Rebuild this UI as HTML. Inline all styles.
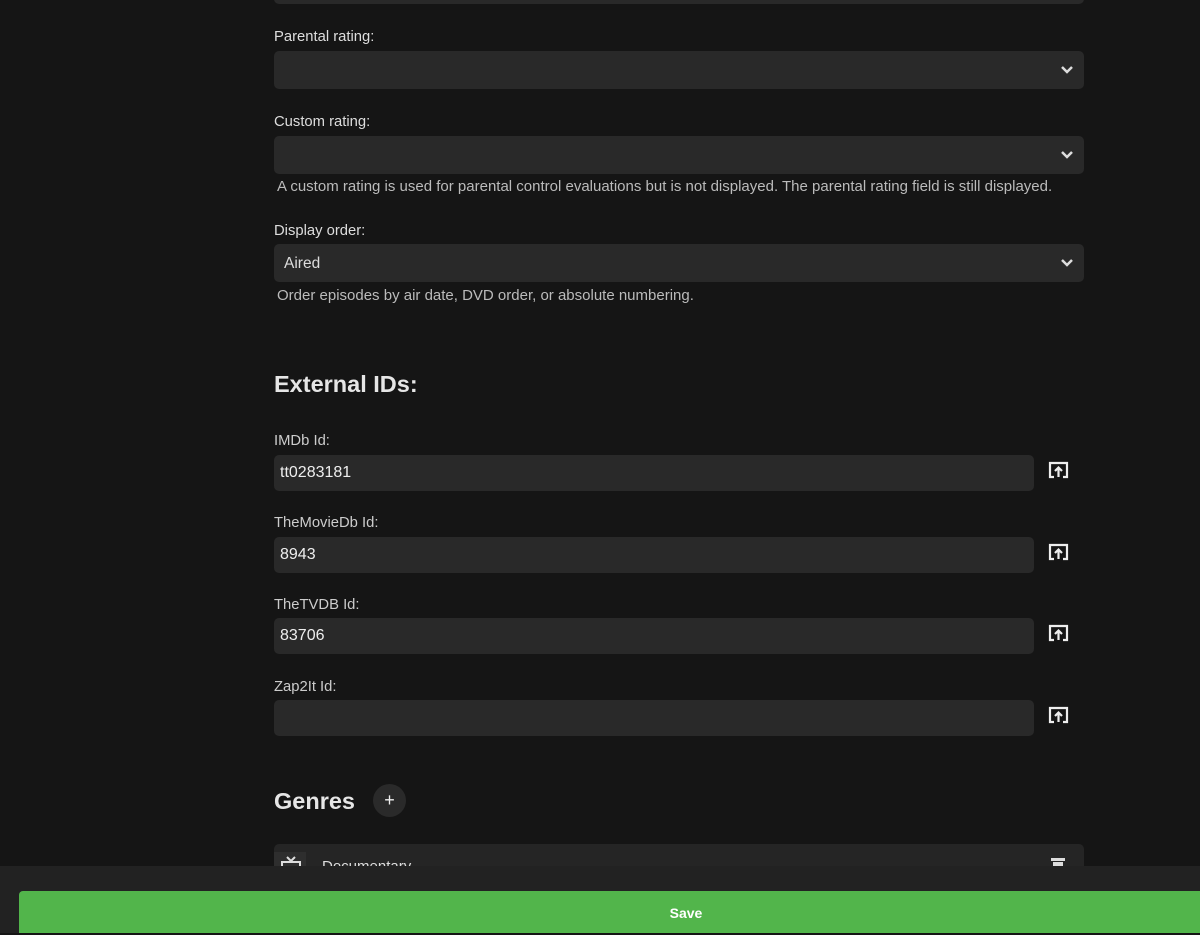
<!DOCTYPE html>
<html><head><style>
*{margin:0;padding:0;box-sizing:border-box}
body{width:1200px;height:933px;background:#151515;font-family:"Liberation Sans",sans-serif;color:#e6e6e6;position:relative;overflow:hidden}
.a{position:absolute}
.lbl{font-size:14.8px;color:#ddd}
.sel{background:#292929;border-radius:5px;height:38px;width:810px;left:274px}
.sel span{position:absolute;left:10px;top:11px;font-size:15.5px;color:#ddd}
.chev{position:absolute;right:10px;top:13px}
.help{font-size:15px;color:#bbb;left:277px}
.inp{background:#292929;border-radius:5px;height:36px;width:760px;left:274px}
.inp span{position:absolute;left:6px;top:9px;font-size:16px;color:#eee}
.ic{left:1048px}
</style></head><body>
<div class="a sel" style="top:-34px"></div>
<div class="a lbl" style="left:274px;top:29px">Parental rating:</div>
<div class="a sel" style="top:51px"><svg class="chev" width="14" height="12" viewBox="0 0 14 12"><path d="M2 3l5 5 5-5" stroke="#ddd" stroke-width="2.5" fill="none"/></svg></div>
<div class="a lbl" style="left:274px;top:114px">Custom rating:</div>
<div class="a sel" style="top:136px"><svg class="chev" width="14" height="12" viewBox="0 0 14 12"><path d="M2 3l5 5 5-5" stroke="#ddd" stroke-width="2.5" fill="none"/></svg></div>
<div class="a help" style="top:178px">A custom rating is used for parental control evaluations but is not displayed. The parental rating field is still displayed.</div>
<div class="a lbl" style="left:274px;top:223px">Display order:</div>
<div class="a sel" style="top:244px"><span>Aired</span><svg class="chev" width="14" height="12" viewBox="0 0 14 12"><path d="M2 3l5 5 5-5" stroke="#ddd" stroke-width="2.5" fill="none"/></svg></div>
<div class="a help" style="top:287px">Order episodes by air date, DVD order, or absolute numbering.</div>
<div class="a" style="left:274px;top:371px;font-size:23.5px;font-weight:bold;color:#e6e6e6">External IDs:</div>

<div class="a lbl" style="left:274px;top:433px;color:#ccc">IMDb Id:</div>
<div class="a inp" style="top:455px"><span>tt0283181</span></div>
<div class="a lbl" style="left:274px;top:515px;color:#ccc">TheMovieDb Id:</div>
<div class="a inp" style="top:537px"><span>8943</span></div>
<div class="a lbl" style="left:274px;top:597px;color:#ccc">TheTVDB Id:</div>
<div class="a inp" style="top:618px"><span>83706</span></div>
<div class="a lbl" style="left:274px;top:679px;color:#ccc">Zap2It Id:</div>
<div class="a inp" style="top:700px"></div>
<svg class="a ic" style="top:461px" width="21" height="18" viewBox="0 0 21 18"><path d="M6 16H2V2h17v14h-4" stroke="#eee" stroke-width="2.2" fill="none"/><path d="M10.5 16V7M7 10l3.5-3.5L14 10" stroke="#eee" stroke-width="2.2" fill="none"/></svg>
<svg class="a ic" style="top:543px" width="21" height="18" viewBox="0 0 21 18"><path d="M6 16H2V2h17v14h-4" stroke="#eee" stroke-width="2.2" fill="none"/><path d="M10.5 16V7M7 10l3.5-3.5L14 10" stroke="#eee" stroke-width="2.2" fill="none"/></svg>
<svg class="a ic" style="top:624px" width="21" height="18" viewBox="0 0 21 18"><path d="M6 16H2V2h17v14h-4" stroke="#eee" stroke-width="2.2" fill="none"/><path d="M10.5 16V7M7 10l3.5-3.5L14 10" stroke="#eee" stroke-width="2.2" fill="none"/></svg>
<svg class="a ic" style="top:706px" width="21" height="18" viewBox="0 0 21 18"><path d="M6 16H2V2h17v14h-4" stroke="#eee" stroke-width="2.2" fill="none"/><path d="M10.5 16V7M7 10l3.5-3.5L14 10" stroke="#eee" stroke-width="2.2" fill="none"/></svg>

<div class="a" style="left:274px;top:788px;font-size:23.5px;font-weight:bold">Genres</div>
<div class="a" style="left:373px;top:784px;width:33px;height:33px;border-radius:50%;background:#2a2a2a;color:#eee;font-size:18px;text-align:center;line-height:32px">+</div>
<div class="a" style="left:274px;top:844px;width:810px;height:40px;background:#252525;border-radius:5px">
<div class="a" style="left:0;top:8px;width:32px;height:30px;background:#2e2e2e"></div>
<svg class="a" style="left:6px;top:12px" width="22" height="20" viewBox="0 0 22 20"><path d="M7 1l4 4 4-4" stroke="#ddd" stroke-width="2" fill="none"/><rect x="2" y="6" width="18" height="12" stroke="#ddd" stroke-width="2" fill="none"/></svg>
<div class="a" style="left:48px;top:14px;font-size:15px;color:#ddd">Documentary</div>
<div class="a" style="left:777px;top:14px;width:14px;height:3px;background:#ddd"></div>
<div class="a" style="left:779px;top:18px;width:10px;height:6px;background:#ddd"></div>
</div>
<div class="a" style="left:0;top:866px;width:1200px;height:67px;background:#222"></div>
<div class="a" style="left:19px;top:891px;width:1334px;height:42px;background:#52b54b;border-radius:4px 0 0 0;color:#fff;font-size:14px;font-weight:bold;text-align:center;line-height:44px">Save</div>
</body></html>
